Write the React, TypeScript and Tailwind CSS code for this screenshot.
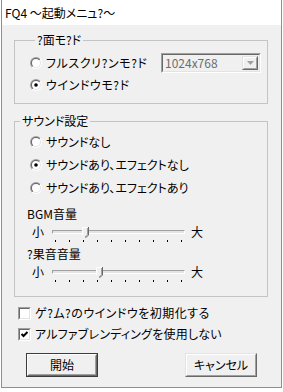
import React from "react";

const Radio = ({ checked }: { checked?: boolean }) => (
  <svg width="12" height="12" viewBox="0 0 12 12" className="shrink-0">
    <defs>
      <linearGradient id="rOut" x1="0" y1="0" x2="1" y2="1">
        <stop offset="0.5" stopColor="#a0a0a0" />
        <stop offset="0.5" stopColor="#ffffff" />
      </linearGradient>
      <linearGradient id="rIn" x1="0" y1="0" x2="1" y2="1">
        <stop offset="0.5" stopColor="#696969" />
        <stop offset="0.5" stopColor="#e3e3e3" />
      </linearGradient>
    </defs>
    <circle cx="6" cy="6" r="6" fill="url(#rOut)" />
    <circle cx="6" cy="6" r="5" fill="url(#rIn)" />
    <circle cx="6" cy="6" r="4" fill="#fff" />
    {checked && <circle cx="6" cy="6" r="1.8" fill="#000" />}
  </svg>
);

const Check = ({ checked }: { checked?: boolean }) => (
  <div className="w-[13px] h-[13px] shrink-0 border border-t-[#a0a0a0] border-l-[#a0a0a0] border-r-white border-b-white">
    <div className="w-full h-full border border-t-[#696969] border-l-[#696969] border-r-[#e3e3e3] border-b-[#e3e3e3] bg-white">
      {checked && (
        <svg width="9" height="9" viewBox="0 0 9 9">
          <polyline points="1.5,4 3.5,6 7.5,2" fill="none" stroke="#000" strokeWidth="2" />
        </svg>
      )}
    </div>
  </div>
);

const Slider = ({ label, pos }: { label: string; pos: number }) => (
  <div>
    <div className="pl-[12px] h-[16px] leading-[16px]">{label}</div>
    <div className="mt-[2px] flex items-start pl-[17px]">
      <span className="w-[12px] h-[16px] leading-[16px]">小</span>
      <div className="ml-[8px] w-[133px]">
        <div className="relative h-[16px]">
          <div className="absolute left-0 right-0 top-[6px] h-[4px] border border-t-[#a0a0a0] border-l-[#a0a0a0] border-b-white border-r-white bg-[#e3e3e3]" />
          <svg
            width="7"
            height="11"
            viewBox="0 0 7 11"
            className="absolute top-[3px]"
            style={{ left: pos }}
          >
            <polygon points="0,0 6,0 6,8 3,11 0,8" fill="#f0f0f0" />
            <polyline points="0.5,8 0.5,0.5 6,0.5" fill="none" stroke="#fff" />
            <polyline points="6.5,0 6.5,8.2 3.3,10.8" fill="none" stroke="#696969" />
            <polyline points="5.5,1 5.5,7.8 3,10" fill="none" stroke="#a0a0a0" />
          </svg>
        </div>
        <div className="flex justify-between px-[3px] h-[2px]">
          {Array.from({ length: 10 }).map((_, i) => (
            <div key={i} className="w-[1px] h-[2px] bg-black" />
          ))}
        </div>
      </div>
      <span className="ml-[6px] h-[16px] leading-[16px]">大</span>
    </div>
  </div>
);

const App = () => {
  return (
    <div className="w-[283px] h-[392px] bg-white font-['Noto_Sans_CJK_JP',sans-serif] text-[12px] leading-[16px] text-black [font-feature-settings:'palt']">
      <div className="ml-[1px] w-[281px] h-[388px] border-x border-b border-[#8f8f8f] flex flex-col">
        <div className="h-[25px] bg-white flex items-center pl-[3px]">FQ4 ～起動メニュ?～</div>
        <div className="flex-1 bg-[#f0f0f0] pl-[12px]">
          <fieldset className="mt-[7px] w-[254px] border border-[#c4c4c4] pl-[15px] pt-[5px] pb-[10px]">
            <legend className="ml-[5px] px-[2px]">?面モ?ド</legend>
            <div className="flex items-center h-[20px]">
              <Radio />
              <span className="ml-[4px] w-[115px] tracking-[0.6px]">フルスクリ?ンモ?ド</span>
              <div className="w-[100px] h-[20px] border border-t-[#a0a0a0] border-l-[#a0a0a0] border-r-white border-b-white">
                <div className="w-full h-full border border-t-[#696969] border-l-[#696969] border-r-[#e3e3e3] border-b-[#e3e3e3] bg-[#f0f0f0] flex items-center pl-[2px] pr-[1px]">
                  <span className="flex-1 text-[#6d6d6d]">1024x768</span>
                  <div className="w-[16px] h-[14px] border border-t-[#e3e3e3] border-l-[#e3e3e3] border-r-[#696969] border-b-[#696969]">
                    <div className="w-full h-full border border-t-white border-l-white border-r-[#a0a0a0] border-b-[#a0a0a0] flex items-center justify-center">
                      <svg width="7" height="4" viewBox="0 0 7 4">
                        <polygon points="0,0 7,0 3.5,4" fill="#a0a0a0" />
                      </svg>
                    </div>
                  </div>
                </div>
              </div>
            </div>
            <div className="mt-[4px] flex items-center h-[16px]">
              <Radio checked />
              <span className="ml-[4px] tracking-[0.6px]">ウインドウモ?ド</span>
            </div>
          </fieldset>

          <fieldset className="mt-[9px] w-[254px] border border-[#c4c4c4] pt-[5px] pb-[14px]">
            <legend className="ml-[5px] px-[2px]">サウンド設定</legend>
            <div className="pl-[15px] flex items-center h-[16px]">
              <Radio />
              <span className="ml-[4px]">サウンドなし</span>
            </div>
            <div className="pl-[15px] mt-[7px] flex items-center h-[16px]">
              <Radio checked />
              <span className="ml-[4px]">サウンドあり、エフェクトなし</span>
            </div>
            <div className="pl-[15px] mt-[7px] flex items-center h-[16px]">
              <Radio />
              <span className="ml-[4px]">サウンドあり、エフェクトあり</span>
            </div>
            <div className="mt-[10px]">
              <Slider label="BGM音量" pos={30} />
            </div>
            <div className="mt-[4px]">
              <Slider label="?果音音量" pos={44} />
            </div>
          </fieldset>

          <div className="mt-[8px] ml-[4px] flex items-center h-[16px]">
            <Check />
            <span className="ml-[4px] tracking-[0.5px]">ゲ?ム?のウインドウを初期化する</span>
          </div>
          <div className="mt-[5px] ml-[4px] flex items-center h-[16px]">
            <Check checked />
            <span className="ml-[4px] tracking-[0.2px]">アルファブレンディングを使用しない</span>
          </div>

          <div className="mt-[11px] ml-[12px] flex">
            <button className="w-[72px] h-[24px] border border-[#3c3c3c] bg-[#f0f0f0]">
              <div className="w-full h-full border border-t-white border-l-white border-r-[#696969] border-b-[#696969]">
                <div className="w-full h-full border border-t-transparent border-l-transparent border-r-[#a0a0a0] border-b-[#a0a0a0] flex items-center justify-center">
                  開始
                </div>
              </div>
            </button>
            <button className="ml-[87px] w-[72px] h-[24px] border border-t-[#e3e3e3] border-l-[#e3e3e3] border-r-[#696969] border-b-[#696969] bg-[#f0f0f0]">
              <div className="w-full h-full border border-t-white border-l-white border-r-[#a0a0a0] border-b-[#a0a0a0] flex items-center justify-center">
                キャンセル
              </div>
            </button>
          </div>
        </div>
      </div>
    </div>
  );
};

export default App;
